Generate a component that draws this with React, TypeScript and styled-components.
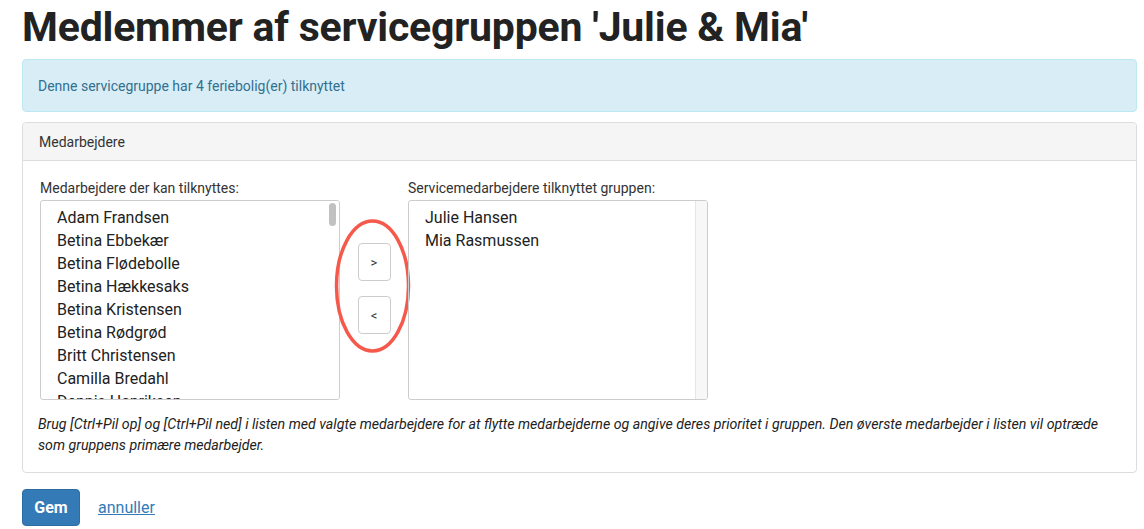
import { FC } from "react";
import styled, { createGlobalStyle } from "styled-components";

const GlobalStyle = createGlobalStyle`
  html, body {
    margin: 0;
    padding: 0;
    background: #fff;
    font-family: Roboto, "Liberation Sans", sans-serif;
    color: #333;
  }
  * { box-sizing: border-box; }
`;

const Page = styled("div")({
  padding: "0 7px 0 22px",
  width: "1144px",
});

const Title = styled("h1")({
  margin: 0,
  paddingTop: "3px",
  height: "59px",
  fontSize: "41px",
  lineHeight: "48px",
  fontWeight: 700,
  color: "#222",
  letterSpacing: "-0.2px",
});

const Alert = styled("div")({
  height: "53px",
  display: "flex",
  alignItems: "center",
  padding: "0 15px",
  background: "#d9edf7",
  border: "1px solid #bce8f1",
  borderRadius: "4px",
  color: "#31708f",
  fontSize: "14px",
  marginBottom: "10px",
});

const Panel = styled("div")({
  border: "1px solid #ddd",
  borderRadius: "4px",
  height: "351px",
  display: "flex",
  flexDirection: "column",
});

const PanelHeading = styled("div")({
  height: "38px",
  background: "#f5f5f5",
  borderBottom: "1px solid #ddd",
  borderRadius: "4px 4px 0 0",
  display: "flex",
  alignItems: "center",
  padding: "0 16px",
  fontSize: "14px",
  color: "#333",
});

const PanelBody = styled("div")({
  padding: "19px 17px 0 17px",
  display: "flex",
  flexDirection: "column",
});

const Columns = styled("div")({
  display: "flex",
  alignItems: "flex-start",
});

const Column = styled("div")({
  display: "flex",
  flexDirection: "column",
  width: "300px",
});

const Label = styled("label")({
  fontSize: "14px",
  lineHeight: "16px",
  color: "#333",
  marginBottom: "4px",
});

const ListBox = styled("div")({
  position: "relative",
  width: "300px",
  height: "200px",
  border: "1px solid #ccc",
  borderRadius: "3px",
  overflow: "hidden",
  padding: "5px 0 0 16px",
});

const Item = styled("div")({
  fontSize: "16px",
  lineHeight: "23px",
  color: "#222",
  whiteSpace: "nowrap",
});

const ScrollTrack = styled("div")<{ $empty?: boolean }>(({ $empty }) => ({
  position: "absolute",
  top: 0,
  right: 0,
  bottom: 0,
  width: "12px",
  background: $empty ? "#f7f7f7" : "#fff",
  borderLeft: $empty ? "1px solid #e6e6e6" : "none",
}));

const ScrollThumb = styled("div")({
  position: "absolute",
  top: "2px",
  right: "3px",
  width: "7px",
  height: "23px",
  borderRadius: "3.5px",
  background: "#c1c1c1",
});

const Mover = styled("div")({
  position: "relative",
  width: "68px",
  display: "flex",
  flexDirection: "column",
  alignItems: "center",
  paddingTop: "63px",
  gap: "15px",
});

const MoveButton = styled("button")({
  width: "33px",
  height: "38px",
  background: "#fff",
  border: "1px solid #ccc",
  borderRadius: "4px",
  fontSize: "13px",
  fontFamily: "Roboto, sans-serif",
  color: "#333",
  padding: 0,
});

const Circle = styled("svg")({
  position: "absolute",
  left: "-5px",
  top: "40px",
  overflow: "visible",
  pointerEvents: "none",
});

const Help = styled("p")({
  margin: "14px 0 0 0",
  marginLeft: "-2px",
  paddingRight: "20px",
  fontSize: "14.2px",
  lineHeight: "21px",
  fontStyle: "italic",
  color: "#222",
});

const Actions = styled("div")({
  display: "flex",
  alignItems: "center",
  gap: "18px",
  marginTop: "16px",
});

const SaveButton = styled("button")({
  width: "58px",
  height: "37px",
  background: "#337ab7",
  border: "1px solid #2e6da4",
  borderRadius: "4px",
  color: "#fff",
  fontWeight: 700,
  fontSize: "16px",
  fontFamily: "Roboto, sans-serif",
  padding: 0,
});

const CancelLink = styled("a")({
  color: "#337ab7",
  fontSize: "16px",
  textDecoration: "underline",
});

const available = [
  "Adam Frandsen",
  "Betina Ebbekær",
  "Betina Flødebolle",
  "Betina Hækkesaks",
  "Betina Kristensen",
  "Betina Rødgrød",
  "Britt Christensen",
  "Camilla Bredahl",
  "Dennis Henriksen",
];

const assigned = ["Julie Hansen", "Mia Rasmussen"];

const List: FC<{ items: string[]; scroll?: boolean }> = ({ items, scroll }) => (
  <ListBox>
    {items.map((name) => (
      <Item key={name}>{name}</Item>
    ))}
    <ScrollTrack $empty={!scroll}>{scroll && <ScrollThumb />}</ScrollTrack>
  </ListBox>
);

const App = () => (
  <Page>
    <GlobalStyle />
    <Title>Medlemmer af servicegruppen 'Julie &amp; Mia'</Title>
    <Alert>Denne servicegruppe har 4 feriebolig(er) tilknyttet</Alert>
    <Panel>
      <PanelHeading>Medarbejdere</PanelHeading>
      <PanelBody>
        <Columns>
          <Column>
            <Label>Medarbejdere der kan tilknyttes:</Label>
            <List items={available} scroll />
          </Column>
          <Mover>
            <Circle width="80" height="140" viewBox="0 0 80 140">
              <ellipse cx="37.5" cy="66" rx="36" ry="65" fill="none" stroke="#f5594b" strokeWidth="3.5" />
            </Circle>
            <MoveButton>&gt;</MoveButton>
            <MoveButton>&lt;</MoveButton>
          </Mover>
          <Column>
            <Label>Servicemedarbejdere tilknyttet gruppen:</Label>
            <List items={assigned} />
          </Column>
        </Columns>
        <Help>
          Brug [Ctrl+Pil op] og [Ctrl+Pil ned] i listen med valgte medarbejdere for at flytte medarbejderne og
          angive deres prioritet i gruppen. Den øverste medarbejder i listen vil optræde som gruppens primære
          medarbejder.
        </Help>
      </PanelBody>
    </Panel>
    <Actions>
      <SaveButton>Gem</SaveButton>
      <CancelLink href="#">annuller</CancelLink>
    </Actions>
  </Page>
);

export default App;
